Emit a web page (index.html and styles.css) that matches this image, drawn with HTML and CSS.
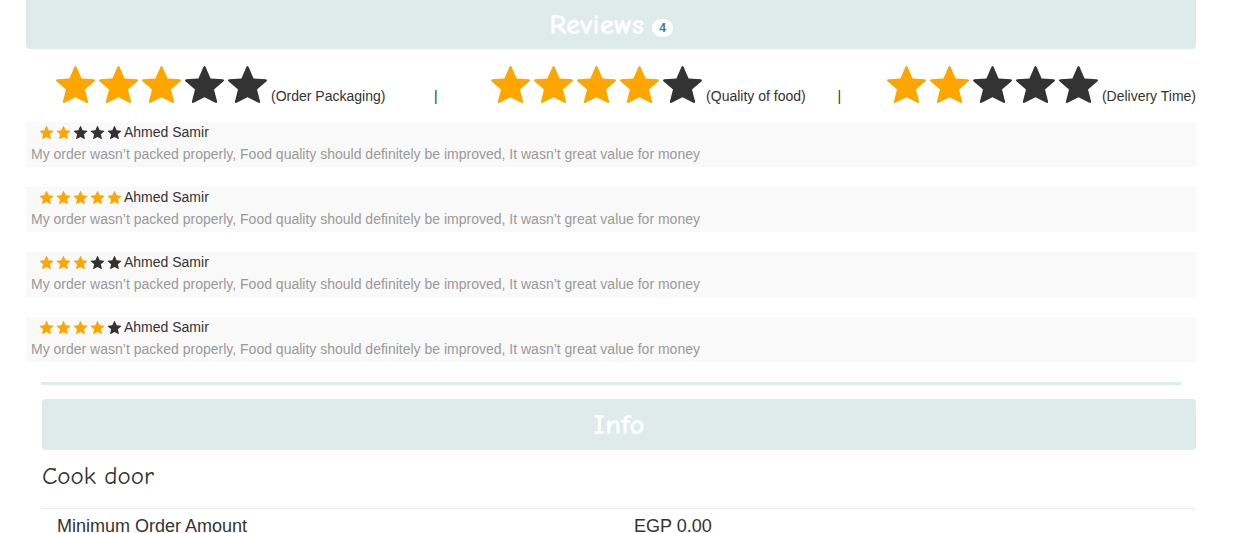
FILE: index.html
```
<!DOCTYPE html>
<html lang="en">
<head>
<meta charset="utf-8">
<title>Cook door - Reviews</title>
<link rel="stylesheet" href="styles.css">
</head>
<body>
<main class="page">
  <section>
    <h2 class="bar bar-top">Reviews <span class="badge">4</span></h2>
    <div class="ratings">
      <div class="rating"><span class="stars stars-lg" data-score="3"></span><span>(Order Packaging)</span></div>
      <span class="divider">|</span>
      <div class="rating"><span class="stars stars-lg" data-score="4"></span><span>(Quality of food)</span></div>
      <span class="divider divider-narrow">|</span>
      <div class="rating"><span class="stars stars-lg" data-score="2"></span><span>(Delivery Time)</span></div>
    </div>
    <div class="reviews">
      <article class="review">
        <div class="author"><span class="stars" data-score="2"></span><span>Ahmed Samir</span></div>
        <p class="comment">My order wasn’t packed properly, Food quality should definitely be improved, It wasn’t great value for money</p>
      </article>
      <article class="review">
        <div class="author"><span class="stars" data-score="5"></span><span>Ahmed Samir</span></div>
        <p class="comment">My order wasn’t packed properly, Food quality should definitely be improved, It wasn’t great value for money</p>
      </article>
      <article class="review">
        <div class="author"><span class="stars" data-score="3"></span><span>Ahmed Samir</span></div>
        <p class="comment">My order wasn’t packed properly, Food quality should definitely be improved, It wasn’t great value for money</p>
      </article>
      <article class="review">
        <div class="author"><span class="stars" data-score="4"></span><span>Ahmed Samir</span></div>
        <p class="comment">My order wasn’t packed properly, Food quality should definitely be improved, It wasn’t great value for money</p>
      </article>
    </div>
  </section>
  <hr class="rule">
  <section class="info">
    <h2 class="bar">Info</h2>
    <h3 class="name">Cook door</h3>
    <table class="details">
      <tbody>
        <tr><th scope="row">Minimum Order Amount</th><td>EGP 0.00</td></tr>
      </tbody>
    </table>
  </section>
</main>
<script src="stars.js"></script>
</body>
</html>
```
FILE: styles.css
```
* { box-sizing: border-box; }

body {
  margin: 0;
  background: #fff;
  color: #333;
  font: 14px/20px "Liberation Sans", Arial, sans-serif;
}

.page { padding: 0 61px 0 26px; }

.bar {
  display: flex;
  align-items: center;
  justify-content: center;
  gap: 8px;
  height: 51px;
  margin: 0;
  border-radius: 4px;
  background: #dfebea;
  color: #fff;
  font: bold 29px/30px "Comic Sans MS", "Comic Neue", cursive;
}

.bar-top {
  height: 49px;
  border-radius: 0 0 4px 4px;
}

.badge {
  padding: 3px 7px;
  margin-top: 6px;
  border-radius: 10px;
  background: #fff;
  color: #337ab7;
  font: bold 12px/12px "Liberation Sans", Arial, sans-serif;
}

.ratings {
  display: flex;
  align-items: flex-end;
  padding: 17px 0 16px 28px;
}

.rating {
  display: flex;
  align-items: flex-end;
  gap: 2px;
  white-space: nowrap;
}

.divider {
  flex: 3;
  padding-right: 3px;
  text-align: center;
}

.divider-narrow {
  flex: 2;
  padding-right: 12px;
}

.stars { display: flex; }

.star {
  width: 17px;
  height: 13px;
  fill: #333;
}

.star-on { fill: #ffa500; }

.stars-lg { padding-bottom: 3px; }

.stars-lg .star {
  width: 43px;
  height: 37px;
}

.reviews {
  display: grid;
  gap: 20px;
}

.review {
  padding: 0 5px 3px;
  background: #f9f9f9;
}

.author {
  display: flex;
  align-items: center;
  gap: 1px;
  padding-left: 7px;
}

.comment {
  margin: 2px 0 0;
  color: #999;
}

.rule {
  height: 3px;
  margin: 20px 15px 14px;
  border: 0;
  background: #dfebea;
}

.info { padding-left: 16px; }

.name {
  margin: 12px 0 18px;
  font: 25px/28px "Comic Sans MS", "Comic Neue", cursive;
}

.details {
  width: 100%;
  border-collapse: collapse;
  table-layout: fixed;
  font-size: 18px;
}

.details th,
.details td {
  padding: 8px 15px 0;
  border-top: 1px solid #e7ebeb;
  font-weight: normal;
  line-height: 18px;
  text-align: left;
}
```
FILE: stars.js
```
const STAR =
  "M20.4 .9Q21.5-.9 22.6 .9L27.6 12.4L39.8 13.2Q42 13.8 40.3 15.6L31 23.4L34.1 35.6Q34.2 37.4 32.4 36.8L21.5 31.3L10.6 36.8Q8.8 37.4 8.9 35.6L12 23.4L2.7 15.6Q1 13.8 3.2 13.2L15.4 12.4Z";

document.querySelectorAll(".stars").forEach((row) => {
  const score = Number(row.dataset.score);
  row.setAttribute("role", "img");
  row.setAttribute("aria-label", `${score} out of 5 stars`);
  for (let i = 0; i < 5; i++) {
    const on = i < score ? " star-on" : "";
    row.insertAdjacentHTML(
      "beforeend",
      `<svg class="star${on}" viewBox="0 0 43 37" aria-hidden="true"><path d="${STAR}"/></svg>`
    );
  }
});
```
